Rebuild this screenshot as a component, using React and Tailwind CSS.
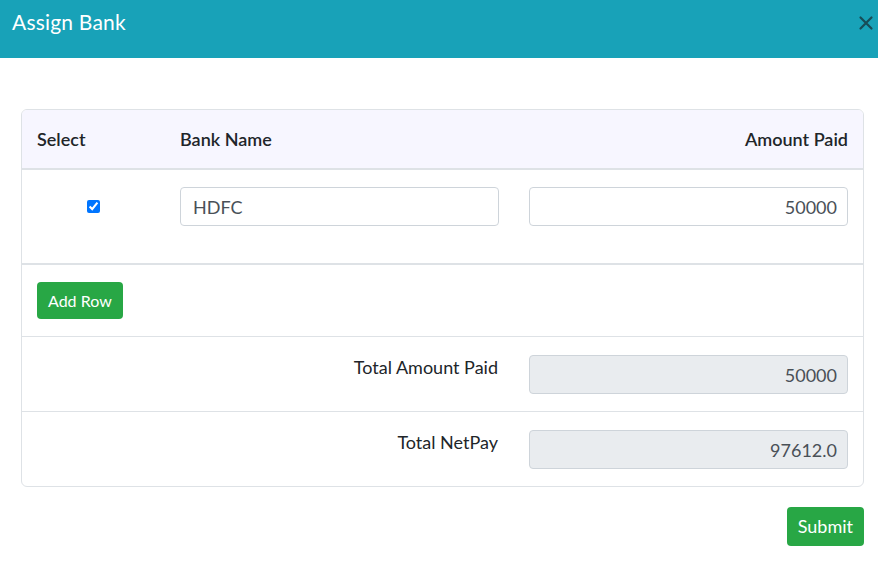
import React, { useState } from 'react';

const inputBase = "h-[39px] w-full rounded-[4px] border border-[#ced4da] pl-3 pr-[10px] text-[18px] text-[#495057] outline-none";

const App = () => {
    const [checked, setChecked] = useState(true);

    return (
        <div className="h-[567px] w-[878px] overflow-hidden bg-white font-['Lato','Liberation_Sans',sans-serif] text-[#212529]">
            <div className="flex h-[58px] items-start justify-between bg-[#18a2b8] pl-3 pr-1">
                <h2 className="mt-[8px] text-[21px] leading-[28px] tracking-[0.2px] text-white">Assign Bank</h2>
                <button className="mt-[15px] text-[#17444d] opacity-90">
                    <svg width="16" height="16" viewBox="0 0 16 16">
                        <path d="M2.5 2.5 L13.5 13.5 M13.5 2.5 L2.5 13.5" stroke="currentColor" strokeWidth="2.2" strokeLinecap="round" />
                    </svg>
                </button>
            </div>

            <div className="pl-[21px] pr-[14px] pt-[51px]">
                <div className="overflow-hidden rounded-[6px] border border-[#dee2e6]">
                    <div className="grid h-[60px] grid-cols-[143px_349px_1fr] items-center border-b-2 border-[#dee2e6] bg-[#f7f6ff] text-[18px] font-semibold">
                        <div className="pl-[15px]">Select</div>
                        <div className="pl-[15px]">Bank Name</div>
                        <div className="pr-[15px] text-right">Amount Paid</div>
                    </div>

                    <div className="grid h-[95px] grid-cols-[143px_349px_1fr] items-start border-b-2 border-[#dee2e6] pt-[17px]">
                        <div className="flex h-[39px] items-center justify-center">
                            <input type="checkbox" checked={checked} onChange={e => setChecked(e.target.checked)} className="h-[13px] w-[13px] accent-[#0075ff]" />
                        </div>
                        <div className="pl-[15px] pr-[15px]">
                            <input className={inputBase} defaultValue="HDFC" />
                        </div>
                        <div className="pl-[15px] pr-[15px]">
                            <input className={`${inputBase} text-right`} defaultValue="50000" />
                        </div>
                    </div>

                    <div className="flex h-[72px] items-start border-b border-[#dee2e6] pl-[15px] pt-[17px]">
                        <button className="h-[37px] rounded-[4px] bg-[#28a745] px-[11px] text-[16px] text-white">Add Row</button>
                    </div>

                    <div className="grid h-[75px] grid-cols-[492px_1fr] items-start border-b border-[#dee2e6] pt-[18px]">
                        <div className="-mt-[1px] pr-[16px] text-right text-[18px]">Total Amount Paid</div>
                        <div className="pl-[15px] pr-[15px]">
                            <input readOnly className={`${inputBase} bg-[#e9ecef] text-right`} value="50000" />
                        </div>
                    </div>

                    <div className="grid h-[74px] grid-cols-[492px_1fr] items-start pt-[18px]">
                        <div className="-mt-[1px] pr-[16px] text-right text-[18px]">Total NetPay</div>
                        <div className="pl-[15px] pr-[15px]">
                            <input readOnly className={`${inputBase} bg-[#e9ecef] text-right`} value="97612.0" />
                        </div>
                    </div>
                </div>

                <div className="flex justify-end pt-[20px]">
                    <button className="h-[39px] rounded-[4px] bg-[#28a745] px-[11px] text-[18px] text-white">Submit</button>
                </div>
            </div>
        </div>
    );
};

export default App;
